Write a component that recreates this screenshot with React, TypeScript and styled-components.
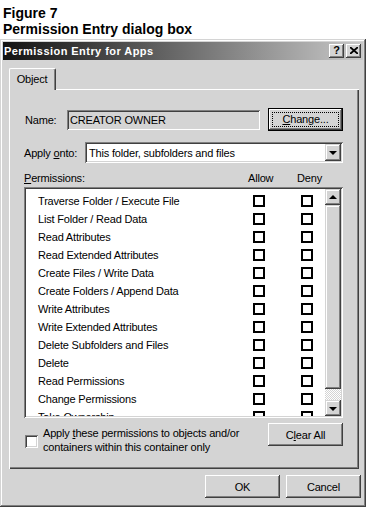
import React from "react";
import styled, { createGlobalStyle } from "styled-components";

const face = "#d4d4d4";
const shadow = "#808080";
const dark = "#404040";

const GlobalStyle = createGlobalStyle`
  html, body { margin: 0; padding: 0; background: #fff; }
  body {
    font-family: "Liberation Sans", Arial, sans-serif;
    font-size: 11px;
    letter-spacing: -0.18px;
    color: #000;
  }
  #root { width: 367px; height: 508px; overflow: hidden; }
`;

const Page = styled.div`
  width: 367px;
  height: 508px;
  display: flex;
  flex-direction: column;
`;

const Caption = styled.div`
  box-sizing: border-box;
  height: 39px;
  padding: 5px 0 0 3px;
  font: bold 14px/16px "Liberation Sans", Arial, sans-serif;
  letter-spacing: 0;
`;

const Window = styled.div`
  box-sizing: border-box;
  width: 366px;
  height: 468px;
  padding: 3px;
  background: ${face};
  box-shadow: inset -1px -1px ${dark}, inset 1px 1px ${face},
    inset -2px -2px ${shadow}, inset 2px 2px #fff;
  display: flex;
  flex-direction: column;
`;

const TitleBar = styled.div`
  height: 18px;
  display: flex;
  align-items: center;
  padding: 0 2px 0 1px;
  background: linear-gradient(to right, #121212 0%, #5a5a5a 40%, #c8c8c8 100%);
  color: #fff;
  font: bold 11px "Liberation Sans", Arial, sans-serif;
  letter-spacing: 0.45px;
`;

const TitleText = styled.span`
  flex: 1;
  white-space: nowrap;
`;

const CapButton = styled.div<{ $gap?: boolean }>`
  box-sizing: border-box;
  width: 15px;
  height: 14px;
  margin-left: ${(p) => (p.$gap ? "2px" : "0")};
  background: ${face};
  box-shadow: inset -1px -1px ${dark}, inset 1px 1px #fff,
    inset -2px -2px ${shadow}, inset 2px 2px ${face};
  display: flex;
  align-items: center;
  justify-content: center;
  color: #000;
  font: bold 11px/1 "Liberation Sans", Arial, sans-serif;
  letter-spacing: 0;
  padding-bottom: 1px;
`;

const TabControl = styled.div`
  margin: 8px 4px 0 6px;
  display: flex;
  flex-direction: column;
`;

const TabStrip = styled.div`
  display: flex;
  height: 22px;
`;

const Tab = styled.div`
  box-sizing: border-box;
  width: 47px;
  height: 22px;
  border-top: 1px solid #fff;
  border-left: 1px solid #fff;
  border-right: 1px solid ${dark};
  border-radius: 2px 2px 0 0;
  box-shadow: inset -1px 0 ${shadow};
  background: ${face};
  display: flex;
  justify-content: center;
  padding: 4px 1px 0 0;
  line-height: 13px;
`;

const TabFill = styled.div`
  flex: 1;
  border-bottom: 1px solid #fff;
`;

const Panel = styled.div`
  box-sizing: border-box;
  height: 379px;
  padding: 18px 16px 0 15px;
  background: ${face};
  box-shadow: inset 1px 0 #fff, inset -1px -1px ${dark}, inset -2px -2px ${shadow};
  display: flex;
  flex-direction: column;
`;

const FieldRow = styled.div<{ $top?: number; $h: number }>`
  display: flex;
  align-items: center;
  height: ${(p) => p.$h}px;
  margin-top: ${(p) => p.$top ?? 0}px;
`;

const Label = styled.span<{ $w: number; $indent?: number }>`
  width: ${(p) => p.$w}px;
  padding-left: ${(p) => p.$indent ?? 0}px;
  box-sizing: border-box;
  white-space: nowrap;
`;

const Key = styled.span`
  text-decoration: underline;
  text-underline-offset: 1px;
`;

const Sunken = styled.div<{ $bg: string }>`
  box-sizing: border-box;
  background: ${(p) => p.$bg};
  box-shadow: inset 1px 1px ${shadow}, inset -1px -1px #fff,
    inset 2px 2px ${dark}, inset -2px -2px ${face};
`;

const NameField = styled(Sunken)`
  width: 193px;
  height: 20px;
  padding: 0 0 0 3px;
  display: flex;
  align-items: center;
  white-space: nowrap;
`;

const Button = styled.div<{ $w?: number }>`
  box-sizing: border-box;
  width: ${(p) => p.$w ?? 75}px;
  height: 23px;
  background: ${face};
  box-shadow: inset -1px -1px ${dark}, inset 1px 1px #fff,
    inset -2px -2px ${shadow}, inset 2px 2px ${face};
  display: flex;
  align-items: center;
  justify-content: center;
  white-space: nowrap;
`;

const DefaultButton = styled.div`
  box-sizing: border-box;
  width: 75px;
  height: 23px;
  margin-left: 8px;
  border: 1px solid #000;
  background: ${face};
  box-shadow: inset -1px -1px ${dark}, inset 1px 1px #fff,
    inset -2px -2px ${shadow};
  padding: 3px;
  display: flex;
`;

const FocusRect = styled.div`
  flex: 1;
  border: 1px dotted #000;
  display: flex;
  align-items: center;
  justify-content: center;
  padding-bottom: 1px;
`;

const Combo = styled(Sunken)`
  flex: 1;
  height: 21px;
  padding: 2px 2px 2px 4px;
  display: flex;
  align-items: center;
`;

const ComboText = styled.span`
  flex: 1;
  white-space: nowrap;
`;

const ArrowButton = styled.div<{ $h?: number }>`
  box-sizing: border-box;
  width: 16px;
  height: ${(p) => p.$h ?? 16}px;
  background: ${face};
  box-shadow: inset -1px -1px ${dark}, inset 1px 1px ${face},
    inset -2px -2px ${shadow}, inset 2px 2px #fff;
  display: flex;
  align-items: center;
  justify-content: center;
  flex: none;
`;

const Triangle = styled.div<{ $up?: boolean }>`
  width: 0;
  height: 0;
  border-left: 4px solid transparent;
  border-right: 4px solid transparent;
  ${(p) =>
    p.$up
      ? `border-bottom: 4px solid #000; margin-top: -1px;`
      : `border-top: 4px solid #000; margin-top: 1px;`}
`;

const HeaderRow = styled.div`
  display: grid;
  grid-template-columns: 224px 49px auto;
  margin-top: 9px;
  height: 13px;
  line-height: 13px;
  white-space: nowrap;
`;

const ListBox = styled(Sunken)`
  margin-top: 2px;
  height: 231px;
  padding: 2px;
  display: flex;
`;

const ListBody = styled.div`
  flex: 1;
  padding: 3px 0 0 12px;
  overflow: hidden;
`;

const PermRow = styled.div`
  display: grid;
  grid-template-columns: 215px 48px 12px;
  height: 18px;
  align-items: center;
  white-space: nowrap;
`;

const Box = styled.div`
  box-sizing: border-box;
  width: 12px;
  height: 12px;
  border: 2px solid #000;
  background: #fff;
`;

const ScrollBar = styled.div`
  width: 16px;
  display: flex;
  flex-direction: column;
`;

const Thumb = styled.div<{ $h: number }>`
  box-sizing: border-box;
  height: ${(p) => p.$h}px;
  background: ${face};
  box-shadow: inset -1px -1px ${dark}, inset 1px 1px ${face},
    inset -2px -2px ${shadow}, inset 2px 2px #fff;
`;

const Track = styled.div`
  flex: 1;
  background-color: ${face};
  background-image: repeating-conic-gradient(#fff 0 25%, ${face} 0 50%);
  background-size: 2px 2px;
`;

const BottomRow = styled.div`
  display: flex;
  align-items: flex-start;
  margin-top: 5px;
`;

const CheckSquare = styled(Sunken)`
  width: 13px;
  height: 13px;
  margin: 12px 0 0 1px;
  flex: none;
`;

const CheckText = styled.div`
  margin: 3px 0 0 5px;
  line-height: 14px;
  flex: 1;
`;

const Buttons = styled.div`
  display: flex;
  justify-content: flex-end;
  gap: 6px;
  margin-top: 6px;
  padding-right: 2px;
`;

const permissions = [
  "Traverse Folder / Execute File",
  "List Folder / Read Data",
  "Read Attributes",
  "Read Extended Attributes",
  "Create Files / Write Data",
  "Create Folders / Append Data",
  "Write Attributes",
  "Write Extended Attributes",
  "Delete Subfolders and Files",
  "Delete",
  "Read Permissions",
  "Change Permissions",
  "Take Ownership",
];

const CloseGlyph = () => (
  <svg width="8" height="7" viewBox="0 0 8 7">
    <path d="M0 0 L8 7 M8 0 L0 7" stroke="#000" strokeWidth="1.8" />
  </svg>
);

export default function App() {
  return (
    <Page>
      <GlobalStyle />
      <Caption>
        Figure 7
        <br />
        Permission Entry dialog box
      </Caption>
      <Window>
        <TitleBar>
          <TitleText>Permission Entry for Apps</TitleText>
          <CapButton>?</CapButton>
          <CapButton $gap>
            <CloseGlyph />
          </CapButton>
        </TitleBar>
        <TabControl>
          <TabStrip>
            <Tab>Object</Tab>
            <TabFill />
          </TabStrip>
          <Panel>
            <FieldRow $h={23}>
              <Label $w={43} $indent={1}>
                Name:
              </Label>
              <NameField $bg={face}>CREATOR OWNER</NameField>
              <DefaultButton>
                <FocusRect>
                  <span>
                    <Key>C</Key>hange...
                  </span>
                </FocusRect>
              </DefaultButton>
            </FieldRow>
            <FieldRow $h={21} $top={11}>
              <Label $w={61}>
                Apply <Key>o</Key>nto:
              </Label>
              <Combo $bg="#fff">
                <ComboText>This folder, subfolders and files</ComboText>
                <ArrowButton $h={17}>
                  <Triangle />
                </ArrowButton>
              </Combo>
            </FieldRow>
            <HeaderRow>
              <span>
                <Key>P</Key>ermissions:
              </span>
              <span>Allow</span>
              <span>Deny</span>
            </HeaderRow>
            <ListBox $bg="#fff">
              <ListBody>
                {permissions.map((p) => (
                  <PermRow key={p}>
                    <span>{p}</span>
                    <Box />
                    <Box />
                  </PermRow>
                ))}
              </ListBody>
              <ScrollBar>
                <ArrowButton>
                  <Triangle $up />
                </ArrowButton>
                <Thumb $h={184} />
                <Track />
                <ArrowButton>
                  <Triangle />
                </ArrowButton>
              </ScrollBar>
            </ListBox>
            <BottomRow>
              <CheckSquare $bg="#fff" />
              <CheckText>
                Apply <Key>t</Key>hese permissions to objects and/or
                <br />
                containers within this container only
              </CheckText>
              <Button>
                <span>
                  C<Key>l</Key>ear All
                </span>
              </Button>
            </BottomRow>
          </Panel>
        </TabControl>
        <Buttons>
          <Button>OK</Button>
          <Button>Cancel</Button>
        </Buttons>
      </Window>
    </Page>
  );
}
